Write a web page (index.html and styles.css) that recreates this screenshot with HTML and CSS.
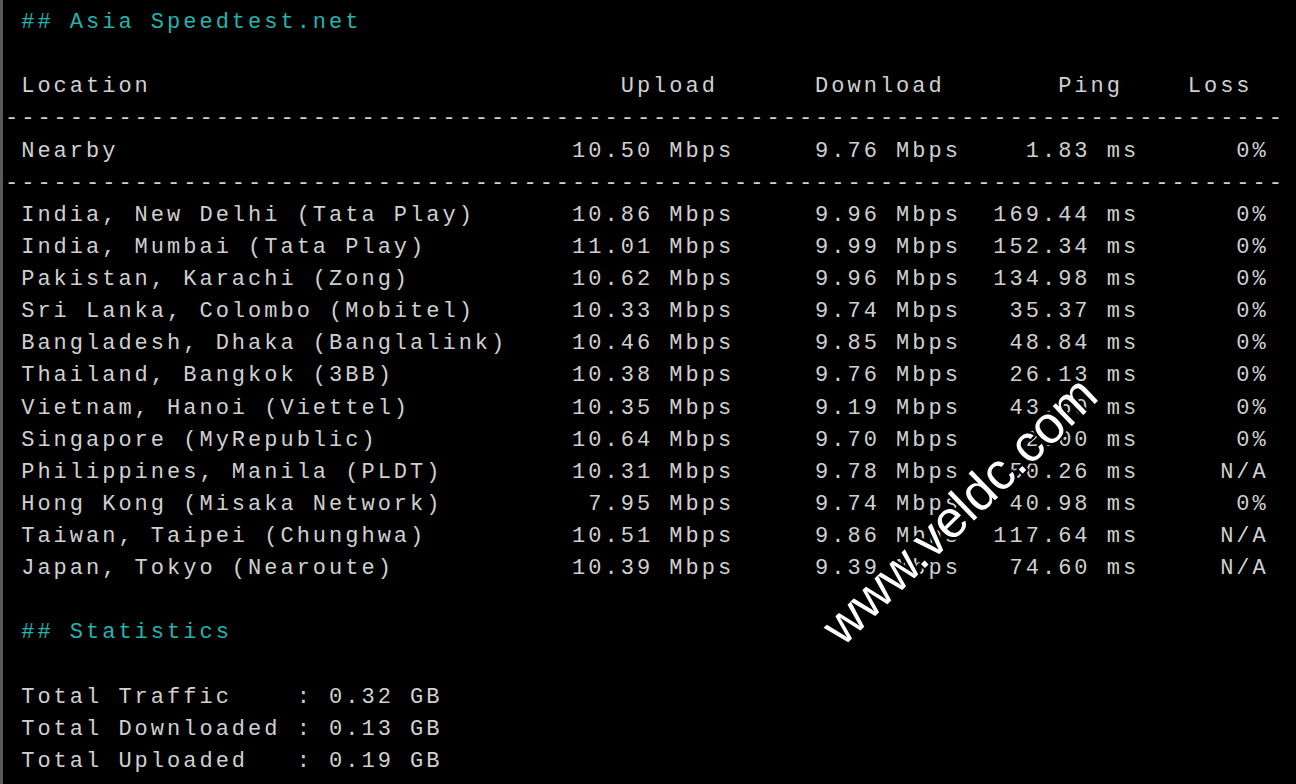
FILE: index.html
```html
<!DOCTYPE html>
<html lang="en">
<head>
    <meta charset="UTF-8">
    <meta name="viewport" content="width=device-width, initial-scale=1.0">
    <title>Asia Speedtest.net</title>
    <link rel="stylesheet" href="styles.css">
</head>
<body>
<div class="terminal">
    <pre class="heading"> ## Asia Speedtest.net</pre>
    <pre class="block"> Location                             Upload      Download       Ping    Loss
-------------------------------------------------------------------------------
 Nearby                            10.50 Mbps     9.76 Mbps    1.83 ms      0%
-------------------------------------------------------------------------------
 India, New Delhi (Tata Play)      10.86 Mbps     9.96 Mbps  169.44 ms      0%
 India, Mumbai (Tata Play)         11.01 Mbps     9.99 Mbps  152.34 ms      0%
 Pakistan, Karachi (Zong)          10.62 Mbps     9.96 Mbps  134.98 ms      0%
 Sri Lanka, Colombo (Mobitel)      10.33 Mbps     9.74 Mbps   35.37 ms      0%
 Bangladesh, Dhaka (Banglalink)    10.46 Mbps     9.85 Mbps   48.84 ms      0%
 Thailand, Bangkok (3BB)           10.38 Mbps     9.76 Mbps   26.13 ms      0%
 Vietnam, Hanoi (Viettel)          10.35 Mbps     9.19 Mbps   43.60 ms      0%
 Singapore (MyRepublic)            10.64 Mbps     9.70 Mbps    2.00 ms      0%
 Philippines, Manila (PLDT)        10.31 Mbps     9.78 Mbps   50.26 ms     N/A
 Hong Kong (Misaka Network)         7.95 Mbps     9.74 Mbps   40.98 ms      0%
 Taiwan, Taipei (Chunghwa)         10.51 Mbps     9.86 Mbps  117.64 ms     N/A
 Japan, Tokyo (Nearoute)           10.39 Mbps     9.39 Mbps   74.60 ms     N/A</pre>
    <pre class="heading"> ## Statistics</pre>
    <pre class="block"> Total Traffic    : 0.32 GB
 Total Downloaded : 0.13 GB
 Total Uploaded   : 0.19 GB</pre>
    <span class="watermark">www.veldc.com</span>
</div>
</body>
</html>
```

FILE: styles.css
```css
html, body {
    margin: 0;
    height: 100%;
    background-color: #000;
}
body {
    overflow: hidden;
}
.terminal {
    position: relative;
    height: 100%;
    box-sizing: border-box;
    padding: 7px 0 0 2px;
    border-left: 3px solid #5a5a5a;
    font-family: "Liberation Mono", "Courier New", monospace;
    font-size: 22px;
    letter-spacing: 3px;
    line-height: 32.13px;
    color: #d0d0d0;
}
.terminal pre {
    margin: 0;
    font: inherit;
}
/* one empty terminal line between a heading and its block */
.heading {
    color: #22b4b0;
    margin-bottom: 32.13px !important;
}
.block + .heading {
    margin-top: 32.13px !important;
}
/* site stamp laid over the screenshot */
.watermark {
    position: absolute;
    left: 956px;
    top: 510px;
    transform: translate(-50%, -50%) rotate(-44deg);
    font-family: "Liberation Sans", Arial, sans-serif;
    font-size: 52px;
    letter-spacing: 0;
    line-height: normal;
    color: #fff;
    white-space: nowrap;
    text-shadow: 2px 0 0 #000, -2px 0 0 #000, 0 2px 0 #000, 0 -2px 0 #000,
                 2px 2px 0 #000, -2px -2px 0 #000, 2px -2px 0 #000, -2px 2px 0 #000;
}
```
